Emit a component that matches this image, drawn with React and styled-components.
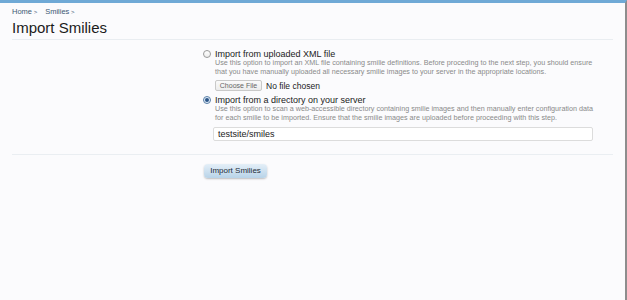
import React from 'react';
import styled, { createGlobalStyle } from 'styled-components';

const Global = createGlobalStyle`
  html, body { margin: 0; padding: 0; background: #fbfbfd; }
  body { font-family: "Liberation Sans", Arial, sans-serif; }
  * { box-sizing: border-box; }
`;

const Page = styled.div`
  height: 300px;
  border-top: 3px solid #6fa9d6;
  border-right: 2px solid #8d8d8d;
  background: #fbfbfd;
`;

const Header = styled.header`
  margin: 0 12px;
  padding: 4px 0 2px;
  border-bottom: 1px solid #e9edf1;
`;

const Breadcrumb = styled.nav`
  display: flex;
  gap: 8px;
  font-size: 7.5px;
  line-height: 10px;
  color: #3b5873;
`;

const Crumb = styled.span`
  &::after { content: " >"; font-size: 6px; }
`;

const Title = styled.h1`
  margin: 2px 0 0;
  font-size: 15px;
  line-height: 18px;
  font-weight: normal;
  color: #1b1b1b;
`;

const Form = styled.form`
  padding-top: 9px;
`;

const Controls = styled.div`
  margin-left: 203px;
  width: 410px;
`;

const OptionLabel = styled.label`
  display: flex;
  align-items: center;
  gap: 4px;
  font-size: 9px;
  line-height: 10px;
  color: #222;
  margin-top: ${p => p.$top || 0}px;
`;

const Radio = styled.span`
  width: 8px;
  height: 8px;
  border-radius: 50%;
  border: 1px solid ${p => (p.$checked ? '#5a7fa6' : '#9a9a9a')};
  background: ${p => (p.$checked ? '#e3eefa' : 'linear-gradient(#ffffff, #ececec)')};
  display: flex;
  align-items: center;
  justify-content: center;
  flex: none;
  &::after {
    content: "";
    display: ${p => (p.$checked ? 'block' : 'none')};
    width: 4px;
    height: 4px;
    border-radius: 50%;
    background: #2a5487;
  }
`;

const Desc = styled.p`
  margin: -1px 0 0 12px;
  font-size: 7.2px;
  line-height: 9px;
  color: #8a8a8a;
  white-space: nowrap;
`;

const FileRow = styled.div`
  display: flex;
  align-items: center;
  gap: 4px;
  margin: 4px 0 0 12px;
  height: 11px;
`;

const FileButton = styled.span`
  display: inline-flex;
  align-items: center;
  justify-content: center;
  width: 47px;
  height: 11px;
  border: 1px solid #c9c9c9;
  border-radius: 2px;
  background: linear-gradient(#fafafa, #ececec);
  font-size: 7px;
  color: #666;
`;

const FileStatus = styled.span`
  font-size: 8.5px;
  color: #222;
`;

const TextInput = styled.div`
  margin: 5px 0 0 10px;
  width: 380px;
  height: 14px;
  border: 1px solid #dcdcdc;
  border-radius: 2px;
  background: #fff;
  padding-left: 4px;
  display: flex;
  align-items: center;
  font-size: 9px;
  color: #222;
`;

const Divider = styled.div`
  margin: 13px 12px 0;
  border-top: 1px solid #eaeef2;
`;

const ButtonRow = styled.div`
  margin: 4px 0 0 204px;
`;

const SubmitButton = styled.span`
  display: inline-flex;
  align-items: center;
  justify-content: center;
  width: 63px;
  height: 14px;
  border-radius: 4px;
  background: linear-gradient(#e4eff8, #b8d3e8);
  box-shadow: 0 1px 2px rgba(0, 0, 0, 0.25);
  font-size: 8px;
  color: #1e2c38;
`;

export default function App() {
  return (
    <>
      <Global />
      <Page>
        <Header>
          <Breadcrumb>
            <Crumb>Home</Crumb>
            <Crumb>Smilies</Crumb>
          </Breadcrumb>
          <Title>Import Smilies</Title>
        </Header>
        <Form>
          <Controls>
            <OptionLabel>
              <Radio />
              Import from uploaded XML file
            </OptionLabel>
            <Desc>
              Use this option to import an XML file containing smilie definitions. Before proceding to the next step, you should ensure
              <br />
              that you have manually uploaded all necessary smilie images to your server in the appropriate locations.
            </Desc>
            <FileRow>
              <FileButton>Choose File</FileButton>
              <FileStatus>No file chosen</FileStatus>
            </FileRow>
            <OptionLabel $top={4}>
              <Radio $checked />
              Import from a directory on your server
            </OptionLabel>
            <Desc>
              Use this option to scan a web-accessible directory containing smilie images and then manually enter configuration data
              <br />
              for each smilie to be imported. Ensure that the smilie images are uploaded before proceeding with this step.
            </Desc>
            <TextInput>testsite/smiles</TextInput>
          </Controls>
          <Divider />
          <ButtonRow>
            <SubmitButton>Import Smilies</SubmitButton>
          </ButtonRow>
        </Form>
      </Page>
    </>
  );
}
